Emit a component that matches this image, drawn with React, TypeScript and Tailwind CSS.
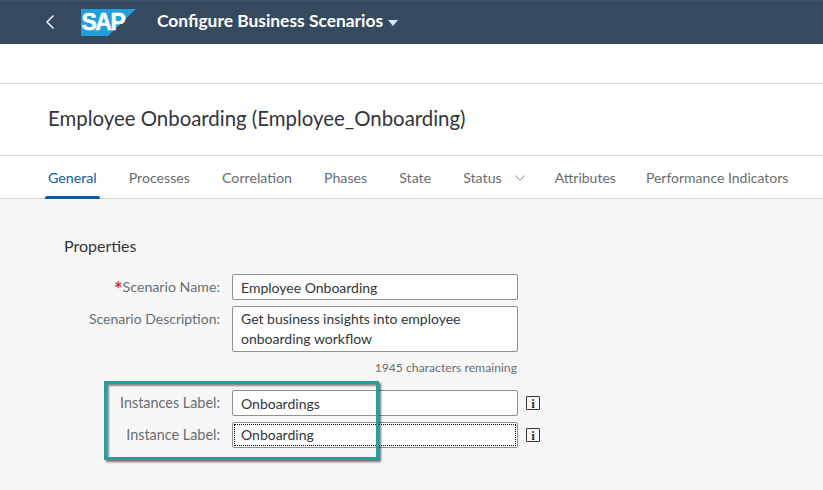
import React from 'react';
import { ChevronLeft, ChevronDown } from 'lucide-react';

const tabs = ['General', 'Processes', 'Correlation', 'Phases', 'State', 'Status', 'Attributes', 'Performance Indicators'];

const SapLogo = () => (
  <svg width="55" height="27" viewBox="0 0 55 27" className="shrink-0">
    <polygon points="0,0 55,0 27,27 0,27" fill="#1f9fdc" />
    <text x="0.5" y="21" fontFamily="'Liberation Sans', sans-serif" fontWeight="700" fontSize="23" letterSpacing="-1.5" fill="#fff" stroke="#fff" strokeWidth="0.5">SAP</text>
  </svg>
);

const InfoIcon = () => (
  <div className="w-[14px] h-[14px] border border-[#333] rounded-[1px] flex items-center justify-center text-[13px] leading-none font-bold text-[#333] font-['Liberation_Serif',serif]">
    i
  </div>
);

export default function App() {
  return (
    <div className="relative w-[823px] h-[490px] overflow-hidden bg-[#f7f7f7] font-['Lato',sans-serif] text-[14px] text-[#32363a]">
      {/* Shell bar */}
      <div className="h-[44px] bg-[#354a5f] border-t border-[#3f5368] flex items-center text-white">
        <ChevronLeft size={24} strokeWidth={1.6} className="ml-[38px] text-[#e5eef7] -translate-y-px" />
        <div className="ml-[19px]"><SapLogo /></div>
        <span className="ml-[21px] text-[17.4px] font-bold leading-none pb-[3px]">Configure Business Scenarios</span>
        <div className="ml-[5px] w-0 h-0 border-l-[5px] border-r-[5px] border-t-[6px] border-l-transparent border-r-transparent border-t-[#d1e8ff]" />
      </div>

      {/* Empty toolbar */}
      <div className="h-[40px] bg-white border-b border-[#d9d9d9]" />

      {/* Title */}
      <div className="h-[72px] bg-white border-b border-[#d9d9d9] flex items-center pl-[48px] pb-[2px]">
        <h1 className="text-[20.4px] font-normal text-[#32363a]">Employee Onboarding (Employee_Onboarding)</h1>
      </div>

      {/* Tabs */}
      <div className="h-[43px] bg-white border-b border-[#d9d9d9] flex pl-[48px] gap-[32px] whitespace-nowrap text-[14.2px]">
        {tabs.map((tab, i) => (
          <div
            key={tab}
            className={`relative flex items-center pt-[1px] ${i === 0 ? 'text-[#0b5aa5]' : 'text-[#6a6d70]'} ${i >= 6 ? 'text-[14px]' : ''} ${i === 7 ? 'ml-[-2px]' : ''}`}
          >
            <span>{tab}</span>
            {tab === 'Status' && <ChevronDown size={18} strokeWidth={1.1} className="ml-[9px] mr-[-6px]" />}
            {i === 0 && <div className="absolute left-[-3px] right-[-3px] bottom-[-1px] h-[3px] bg-[#0b5aa5] rounded-t-[2px]" />}
          </div>
        ))}
      </div>

      {/* Form */}
      <div className="pl-[64px] pt-[37px]">
        <h2 className="text-[16px] font-normal leading-[20px] text-[#32363a]">Properties</h2>

        <div className="mt-[18px] grid grid-cols-[156px_286px_auto] gap-x-[12px] items-start w-fit">
          <div className="h-[26px] flex items-center justify-end text-[#6a6d70] text-[14.2px]">
            <span className="text-[#e0302b] font-bold text-[20px] leading-none pt-[4px]">*</span>Scenario Name:
          </div>
          <div className="h-[26px] bg-white border border-[#89919a] rounded-[2px] px-[8px] flex items-center">Employee Onboarding</div>
          <div />

          <div className="mt-[6px] h-[24px] flex items-center justify-end text-[#6a6d70] whitespace-nowrap">Scenario Description:</div>
          <div className="mt-[6px] h-[46px] bg-white border border-[#89919a] rounded-[2px] px-[8px] py-[2px] leading-[20px]">
            Get business insights into employee onboarding workflow
          </div>
          <div />

          <div />
          <div className="mt-[7px] h-[18px] text-right pr-[1px] text-[12.2px] leading-[18px] text-[#6a6d70]">1945 characters remaining</div>
          <div />

          <div className="mt-[13px] h-[26px] flex items-center justify-end text-[#6a6d70] text-[14.4px]">Instances Label:</div>
          <div className="mt-[13px] h-[26px] bg-white border border-[#89919a] rounded-[2px] px-[8px] flex items-center">Onboardings</div>
          <div className="mt-[13px] h-[26px] flex items-center ml-[-4px]"><InfoIcon /></div>

          <div className="mt-[6px] h-[26px] flex items-center justify-end text-[#6a6d70] text-[14.4px] pb-[1px]">Instance Label:</div>
          <div className="mt-[6px] h-[26px] bg-white border border-[#89919a] rounded-[2px] flex items-center p-[1px]">
            <div className="w-full h-full border border-dotted border-black px-[6px] pb-[1px] flex items-center">Onboarding</div>
          </div>
          <div className="mt-[6px] h-[26px] flex items-center ml-[-4px]"><InfoIcon /></div>
        </div>
      </div>

      {/* Highlight drawn over the screenshot */}
      <div className="absolute left-[104px] top-[381px] w-[275px] h-[79px] border-[3px] border-[#2a9d96] shadow-[2px_2px_2px_rgba(0,0,0,0.55),inset_2px_2px_2px_rgba(0,0,0,0.45)]" />
    </div>
  );
}
